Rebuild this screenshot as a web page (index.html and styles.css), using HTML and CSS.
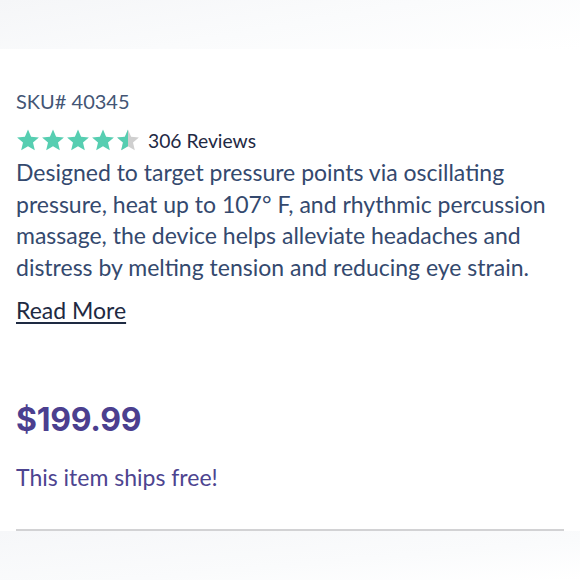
FILE: index.html
```html
<!DOCTYPE html>
<html>
<head>
<meta charset="utf-8">
<link rel="stylesheet" href="styles.css">
</head>
<body>
<div class="page">
  <div class="top-fade"></div>
  <div class="content">
    <div class="sku">SKU# 40345</div>
    <div class="rating">
      <div class="stars">
        <svg class="star" viewBox="0 0 24 24"><path d="M12 1.5l3.1 7.2 7.8.7-5.9 5.2 1.8 7.7L12 18.2l-6.8 4.1 1.8-7.7-5.9-5.2 7.8-.7z" fill="#56ceb1"/></svg>
        <svg class="star" viewBox="0 0 24 24"><path d="M12 1.5l3.1 7.2 7.8.7-5.9 5.2 1.8 7.7L12 18.2l-6.8 4.1 1.8-7.7-5.9-5.2 7.8-.7z" fill="#56ceb1"/></svg>
        <svg class="star" viewBox="0 0 24 24"><path d="M12 1.5l3.1 7.2 7.8.7-5.9 5.2 1.8 7.7L12 18.2l-6.8 4.1 1.8-7.7-5.9-5.2 7.8-.7z" fill="#56ceb1"/></svg>
        <svg class="star" viewBox="0 0 24 24"><path d="M12 1.5l3.1 7.2 7.8.7-5.9 5.2 1.8 7.7L12 18.2l-6.8 4.1 1.8-7.7-5.9-5.2 7.8-.7z" fill="#56ceb1"/></svg>
        <svg class="star" viewBox="0 0 24 24"><path d="M12 1.5l3.1 7.2 7.8.7-5.9 5.2 1.8 7.7L12 18.2l-6.8 4.1 1.8-7.7-5.9-5.2 7.8-.7z" fill="#cfcfcf"/><path d="M12 1.5L12 18.2l-6.8 4.1 1.8-7.7-5.9-5.2 7.8-.7z" fill="#56ceb1"/></svg>
      </div>
      <span class="reviews">306 Reviews</span>
    </div>
    <p class="desc">Designed to target pressure points via oscillating pressure, heat up to 107° F, and rhythmic percussion massage, the device helps alleviate headaches and distress by melting tension and reducing eye strain.</p>
    <a class="read-more" href="#">Read More</a>
    <div class="price">$199.99</div>
    <div class="ships">This item ships free!</div>
    <hr class="divider">
  </div>
  <div class="bottom-fade"></div>
</div>
</body>
</html>
```
FILE: styles.css
```css
html, body {
  margin: 0;
  padding: 0;
  background: #ffffff;
}
.page {
  width: 580px;
  height: 580px;
  overflow: hidden;
  display: flex;
  flex-direction: column;
  font-family: "Lato", "Open Sans", sans-serif;
}
.top-fade {
  height: 49px;
  flex: none;
  background: linear-gradient(170deg, #f5f6f8 0%, #fafbfc 50%, #ffffff 100%);
}
.content {
  padding: 0 16px 0 16px;
  display: flex;
  flex-direction: column;
}
.sku {
  margin-top: 40px;
  font-size: 20px;
  line-height: 24px;
  color: #435575;
}
.rating {
  display: flex;
  align-items: center;
  margin-top: 15px;
  height: 24px;
}
.stars {
  display: flex;
  gap: 1px;
}
.star {
  width: 24px;
  height: 24px;
  display: block;
}
.reviews {
  margin-left: 8px;
  font-size: 19.3px;
  color: #1f2a44;
}
.desc {
  margin: 5px 0 0;
  font-size: 23px;
  line-height: 31.5px;
  color: #34496e;
}
.read-more {
  margin-top: 13px;
  align-self: flex-start;
  font-size: 23px;
  line-height: 28px;
  color: #1e2a42;
  text-decoration: underline;
  text-underline-offset: 3px;
}
.price {
  margin-top: 76px;
  font-family: "Inter", "Liberation Sans", sans-serif;
  font-weight: 700;
  font-size: 32px;
  line-height: 40px;
  color: #4b3f8f;
  letter-spacing: -0.3px;
}
.ships {
  margin-top: 23px;
  font-size: 23px;
  line-height: 28px;
  color: #4d4490;
}
.divider {
  margin: 38px 0 0;
  border: 0;
  height: 2px;
  background: #d2d2d4;
}
.bottom-fade {
  flex: 1;
  background: linear-gradient(175deg, #f6f7f9 0%, #fafbfc 60%, #ffffff 100%);
}
```
